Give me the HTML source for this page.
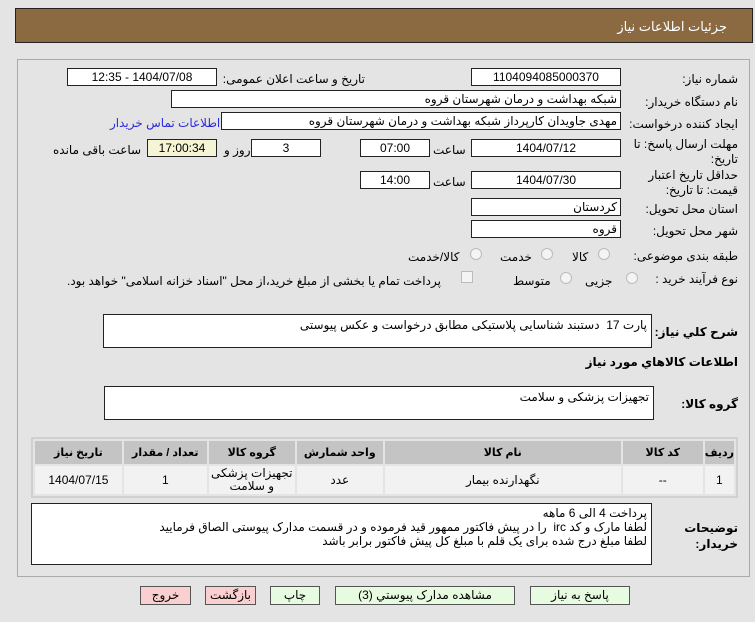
<!DOCTYPE html>
<html><head><meta charset="utf-8">
<style>
*{box-sizing:border-box;margin:0;padding:0}
body{width:755px;height:622px;background:#e4e4e4;font-family:"Liberation Sans","DejaVu Sans",sans-serif;font-size:12px;color:#000;position:relative;overflow:hidden;direction:rtl}
.a{position:absolute}
.hdr{left:15px;top:8px;width:738px;height:35px;background:#8b6a42;border:1px solid #222}
.hdr span{position:absolute;right:25px;top:10px;color:#fff;font-size:13px}
.panel{left:17px;top:59px;width:733px;height:518px;border:1px solid #aaa;background:#e4e4e4}
.f{position:absolute;background:#fff;border:1px solid #222;height:18px;line-height:16px;padding:0 3px;font-size:12px;white-space:nowrap;overflow:hidden}
.c{text-align:center}
.l{position:absolute;font-size:12px;white-space:nowrap}
.ta{position:absolute;background:#fff;border:1px solid #222;padding:3px 4px;font-size:12px;line-height:15px}
.rad{position:absolute;width:12px;height:12px;border-radius:50%;border:1px solid #bbb;background:#f4f4f4}
table{position:absolute;left:31px;top:437px;width:707px;border:2px solid #d0d0d0;border-collapse:separate;border-spacing:2px;background:#e4e4e4}
th{background:#c4c4c4;height:23px;font-size:11px;font-weight:bold}
td{background:#f2f2f2;height:28px;text-align:center;font-size:12px;line-height:13px}
.b{position:absolute;top:586px;height:19px;border:1px solid #555;text-align:center;line-height:17px;font-size:12px}
.g{background:#e6fbe0}.r{background:#f9cfcf}
</style></head><body>
<div class="a hdr"><span>جزئیات اطلاعات نیاز</span></div>
<div class="a panel"></div>

<div class="l" style="right:17px;top:72px">شماره نیاز:</div>
<div class="f c" style="left:471px;top:68px;width:150px">1104094085000370</div>
<div class="l" style="right:390px;top:72px">تاریخ و ساعت اعلان عمومی:</div>
<div class="f c" style="left:67px;top:68px;width:150px">1404/07/08 - 12:35</div>

<div class="l" style="right:17px;top:95px">نام دستگاه خریدار:</div>
<div class="f" style="left:171px;top:90px;width:450px">شبکه بهداشت و درمان شهرستان قروه</div>

<div class="l" style="right:17px;top:117px">ایجاد کننده درخواست:</div>
<div class="f" style="left:221px;top:112px;width:400px">مهدی جاویدان کارپرداز شبکه بهداشت و درمان شهرستان قروه</div>
<div class="l" style="left:110px;top:116px;color:#2b2bdd">اطلاعات تماس خریدار</div>

<div class="l" style="right:17px;top:137px;line-height:15px;text-align:right">مهلت ارسال پاسخ: تا<br>تاریخ:</div>
<div class="f c" style="left:471px;top:139px;width:150px">1404/07/12</div>
<div class="l" style="left:433px;top:143px">ساعت</div>
<div class="f c" style="left:360px;top:139px;width:70px">07:00</div>
<div class="f c" style="left:251px;top:139px;width:70px">3</div>
<div class="l" style="left:224px;top:143px">روز و</div>
<div class="f c" style="left:147px;top:139px;width:70px;background:#f5f5d5">17:00:34</div>
<div class="l" style="left:53px;top:143px">ساعت باقی مانده</div>

<div class="l" style="right:17px;top:168px;line-height:15px;text-align:right">حداقل تاریخ اعتبار<br>قیمت: تا تاریخ:</div>
<div class="f c" style="left:471px;top:171px;width:150px">1404/07/30</div>
<div class="l" style="left:433px;top:175px">ساعت</div>
<div class="f c" style="left:360px;top:171px;width:70px">14:00</div>

<div class="l" style="right:17px;top:202px">استان محل تحویل:</div>
<div class="f" style="left:471px;top:198px;width:150px">کردستان</div>
<div class="l" style="right:17px;top:224px">شهر محل تحویل:</div>
<div class="f" style="left:471px;top:220px;width:150px">قروه</div>

<div class="l" style="right:17px;top:249px">طبقه بندی موضوعی:</div>
<div class="rad" style="left:598px;top:248px"></div><div class="l" style="left:572px;top:250px">کالا</div>
<div class="rad" style="left:541px;top:248px"></div><div class="l" style="left:500px;top:250px">خدمت</div>
<div class="rad" style="left:470px;top:248px"></div><div class="l" style="left:408px;top:250px">کالا/خدمت</div>

<div class="l" style="right:17px;top:272px">نوع فرآیند خرید :</div>
<div class="rad" style="left:626px;top:272px"></div><div class="l" style="left:585px;top:274px">جزیی</div>
<div class="rad" style="left:560px;top:272px"></div><div class="l" style="left:513px;top:274px">متوسط</div>
<div class="a" style="left:461px;top:271px;width:12px;height:12px;border:1px solid #bbb;background:#f4f4f4"></div>
<div class="l" style="left:67px;top:274px">پرداخت تمام یا بخشی از مبلغ خرید،از محل "اسناد خزانه اسلامی" خواهد بود.</div>

<div class="l" style="right:17px;top:325px;font-weight:bold">شرح کلي نياز:</div>
<div class="ta" style="left:103px;top:314px;width:549px;height:34px">پارت 17&nbsp; دستبند شناسایی پلاستیکی مطابق درخواست و عکس پیوستی</div>
<div class="l" style="right:17px;top:355px;font-weight:bold">اطلاعات کالاهاي مورد نياز</div>
<div class="l" style="right:17px;top:397px;font-weight:bold">گروه کالا:</div>
<div class="ta" style="left:104px;top:386px;width:550px;height:34px">تجهیزات پزشکی و سلامت</div>

<table>
<tr><th style="width:27px">ردیف</th><th style="width:80px">کد کالا</th><th style="width:236px">نام کالا</th><th style="width:86px">واحد شمارش</th><th style="width:86px">گروه کالا</th><th style="width:83px">تعداد / مقدار</th><th>تاریخ نیاز</th></tr>
<tr><td>1</td><td>--</td><td>نگهدارنده بیمار</td><td>عدد</td><td>تجهیزات پزشکی و سلامت</td><td>1</td><td>1404/07/15</td></tr>
</table>

<div class="l" style="right:17px;top:520px;font-weight:bold;line-height:16px;text-align:right">توضیحات<br>خریدار:</div>
<div class="ta" style="left:31px;top:503px;width:621px;height:62px;line-height:14px;padding-top:2px">پرداخت 4 الی 6 ماهه<br>لطفا مارک و کد irc&nbsp; را در پیش فاکتور ممهور قید فرموده و در قسمت مدارک پیوستی الصاق فرمایید<br>لطفا مبلغ درج شده برای یک قلم با مبلغ کل پیش فاکتور برابر باشد</div>

<div class="b r" style="left:140px;width:51px">خروج</div>
<div class="b r" style="left:205px;width:51px">بازگشت</div>
<div class="b g" style="left:270px;width:50px">چاپ</div>
<div class="b g" style="left:335px;width:180px">مشاهده مدارک پیوستي (3)</div>
<div class="b g" style="left:530px;width:100px">پاسخ به نياز</div>
</body></html>
